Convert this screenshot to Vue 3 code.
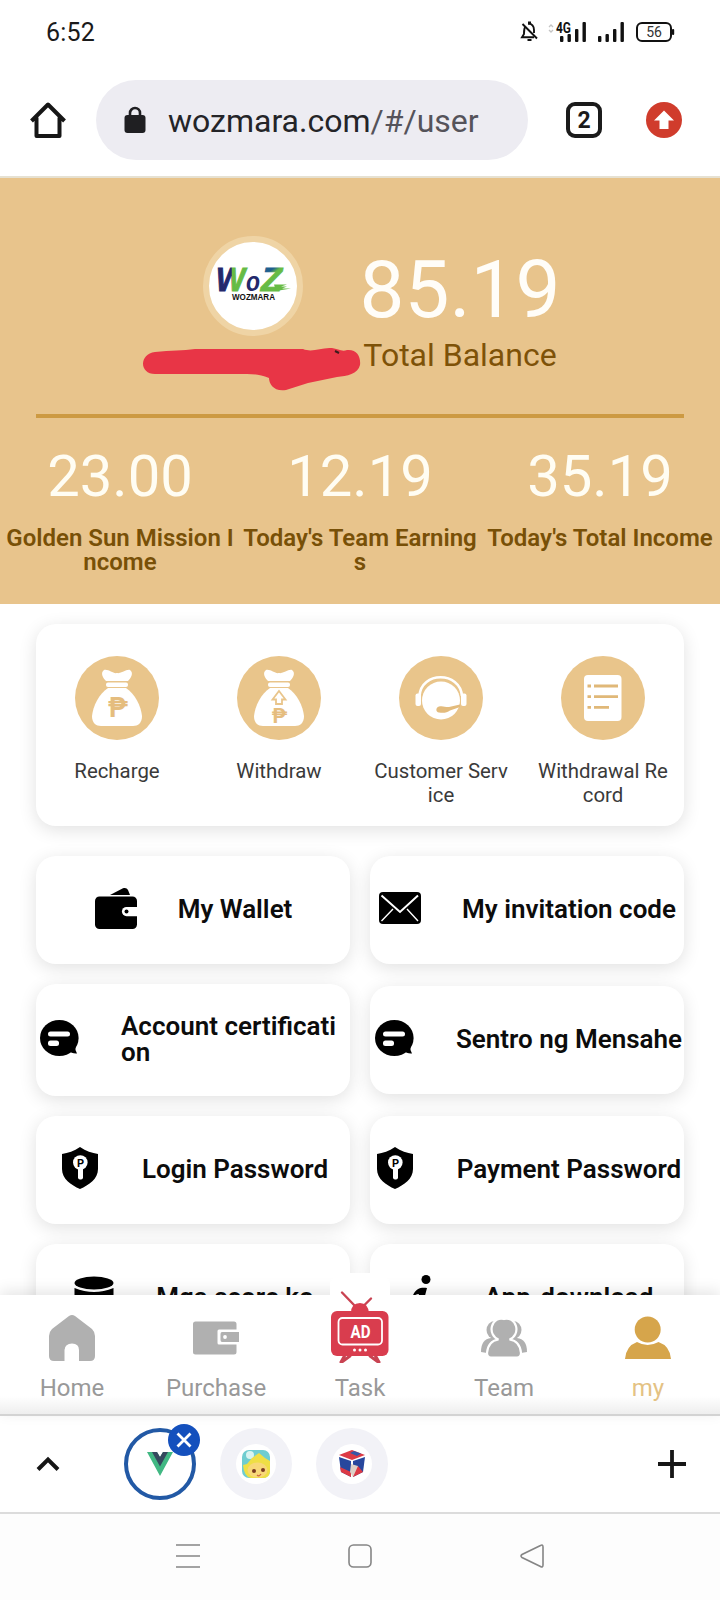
<script setup>
const stats = [
  { value: '23.00', label: 'Golden Sun Mission Income' },
  { value: '12.19', label: "Today's Team Earnings" },
  { value: '35.19', label: "Today's Total Income" },
]
const actions = [
  { icon: 'recharge', label: 'Recharge' },
  { icon: 'withdraw', label: 'Withdraw' },
  { icon: 'service', label: 'Customer Service' },
  { icon: 'record', label: 'Withdrawal Record' },
]
const links = [
  { icon: 'wallet', label: 'My Wallet' },
  { icon: 'mail', label: 'My invitation code' },
  { icon: 'chat', label: 'Account certification' },
  { icon: 'chat', label: 'Sentro ng Mensahe' },
  { icon: 'shield', label: 'Login Password' },
  { icon: 'shield', label: 'Payment Password' },
  { icon: 'coins', label: 'Mga score ko' },
  { icon: 'info', label: 'App-download' },
]
const tabs = ['Home', 'Purchase', 'Task', 'Team', 'my']
</script>

<template>
  <div class="phone">
    <div class="status">
      <span class="clock">6:52</span>
      <svg class="status-icons" width="156" height="24" viewBox="0 0 156 24">
        <g fill="none" stroke="#111" stroke-width="1.9">
          <path d="M5.5 6.5C3.8 8.500 4 11 4 14L2 17.200H14M8 3.500C12 3.500 14 6.500 14 10V13" />
          <path d="M2.500 4L17 18.500" />
        </g>
        <rect x="8" y="1.500" width="3" height="3" fill="#111" /><rect x="7.500" y="19" width="4" height="2" fill="#111" />
        <path d="M29 7l2-2 2 2M29 10l2 2 2-2" fill="none" stroke="#c4c4c4" stroke-width="1.300" />
        <text x="36" y="13" class="net" textLength="15" lengthAdjust="spacingAndGlyphs">4G</text>
        <g fill="#111">
          <rect x="40" y="16" width="3.400" height="6" rx="1" /><rect x="47.500" y="14" width="3.400" height="8" rx="1" />
          <rect x="55" y="9" width="3.400" height="13" rx="1" /><rect x="62.500" y="2" width="3.400" height="20" rx="1" />
          <rect x="78" y="16" width="3.400" height="6" rx="1" /><rect x="85.500" y="14" width="3.400" height="8" rx="1" />
          <rect x="93" y="9" width="3.400" height="13" rx="1" /><rect x="100.500" y="2" width="3.400" height="20" rx="1" />
          <rect x="152" y="9" width="2.200" height="6" rx="1" />
        </g>
        <rect x="117" y="3" width="34" height="18" rx="5" fill="none" stroke="#111" stroke-width="2" />
        <text x="134" y="17" class="batt" text-anchor="middle">56</text>
      </svg>
    </div>

    <div class="toolbar">
      <svg width="36" height="38" viewBox="0 0 36 38"><path d="M1.500 20L18 3.500 34.500 20M6.500 16.500V35H29.500V16.500" fill="none" stroke="#161616" stroke-width="4" stroke-linejoin="round" /></svg>
      <div class="url">
        <svg width="22" height="28" viewBox="0 0 22 28"><path d="M6 11V7a5 5 0 0 1 10 0v4" fill="none" stroke="#1f1f22" stroke-width="2.600" /><rect x="0.500" y="9" width="21" height="18" rx="3" fill="#1f1f22" /></svg>
        <span class="address">wozmara.com<span class="path">/#/user</span></span>
      </div>
      <div class="count">2</div>
      <svg width="36" height="36" viewBox="0 0 36 36"><circle cx="18" cy="18" r="18" fill="#d03c2c" /><path d="M18 8.500L28 18.500H22.500V27H13.500V18.500H8Z" fill="#fff" /></svg>
    </div>

    <main class="content">
      <header class="hero">
        <div class="summary">
          <div class="user">
            <div class="avatar">
              <svg width="78" height="38" viewBox="0 0 78 38">
                <defs>
                  <linearGradient id="w-fill" x1="0" y1="0" x2="1" y2="0"><stop offset="0.48" stop-color="#23286b" /><stop offset="0.52" stop-color="#66bb45" /></linearGradient>
                  <linearGradient id="z-fill" x1="0" y1="0" x2="0.5" y2="1"><stop offset="0.38" stop-color="#1f5f8e" /><stop offset="0.5" stop-color="#66bb45" /></linearGradient>
                </defs>
                <g class="logo">
                  <text x="2" y="26" fill="url(#w-fill)" stroke="url(#w-fill)" textLength="29" lengthAdjust="spacingAndGlyphs">W</text>
                  <text x="32" y="26" fill="#23286b" class="small-o" textLength="14" lengthAdjust="spacingAndGlyphs">o</text>
                  <text x="47" y="26" fill="url(#z-fill)" stroke="url(#z-fill)" textLength="21" lengthAdjust="spacingAndGlyphs">Z</text>
                </g>
                <path d="M60 19.500H73L67 21.500H73L68 23.500H77L62 26Z" fill="#66bb45" />
                <text x="18" y="35" class="brand" textLength="43" lengthAdjust="spacingAndGlyphs">WOZMARA</text>
              </svg>
            </div>
            <svg class="scribble" width="220" height="46" viewBox="0 0 220 46">
              <path d="M12 6C28 4 40 5 52 3L160 3C170 7 178 1 189 2 195 3 199 6 204 4 214 3 218 11 217 19 215 28 204 30 194 31L165 37 143 44C131 46 126 38 126 32 118 29 112 28 104 28H12C-4 28-4 8 12 6Z" fill="#e83546" />
              <path d="M192 5L196 7" stroke="#3a1c1c" stroke-width="2" />
            </svg>
          </div>
          <div class="balance">
            <div class="amount">85.19</div>
            <div class="caption">Total Balance</div>
          </div>
        </div>
        <div class="rule"></div>
        <div class="stats">
          <div v-for="s in stats" :key="s.label" class="stat">
            <div class="value">{{ s.value }}</div>
            <div class="name">{{ s.label }}</div>
          </div>
        </div>
      </header>

      <section class="actions">
        <div v-for="a in actions" :key="a.icon" class="action">
          <svg width="84" height="84" viewBox="0 0 84 84">
            <circle cx="42" cy="42" r="42" fill="#e9c58b" />
            <template v-if="a.icon === 'recharge' || a.icon === 'withdraw'">
              <path d="M29 14C34 13 38 18 42 17 46 18 51 13 55 14 59 17 56 22 53 25H31C28 22 25 17 29 14Z" fill="#fff" />
              <rect x="31" y="26.500" width="22" height="4.500" rx="2" fill="#fff" />
              <path d="M33 32H51C60 38 66 50 67 60 67 67 63 70 58 70H26C21 70 17 67 17 60 18 50 24 38 33 32Z" fill="#fff" />
              <text v-if="a.icon === 'recharge'" x="43" y="60.500" class="peso">₱</text>
              <template v-else>
                <path d="M42 35L48.500 43.500H45V48H39V43.500H35.500Z" fill="none" stroke="#e9c58b" stroke-width="1.800" />
                <text x="42.500" y="67" class="peso peso-small">₱</text>
              </template>
            </template>
            <template v-else-if="a.icon === 'service'">
              <path d="M20.500 40C22 15 61 15 63 40" fill="none" stroke="#fff" stroke-width="2.600" />
              <circle cx="42" cy="44.500" r="19" fill="#fff" />
              <rect x="16.500" y="37.500" width="5.500" height="12.500" rx="2" fill="#fff" />
              <rect x="62" y="37.500" width="5.500" height="12.500" rx="2" fill="#fff" />
              <path d="M40 50.500C44 49.500 47 51.500 50 51L61 48.500V51L51 54.500C48 57 44 57 40 56.500 36.500 56 36.500 51.500 40 50.500Z" fill="#e3bb7c" />
            </template>
            <template v-else>
              <rect x="23" y="19" width="37.500" height="46" rx="4" fill="#fff" />
              <path d="M33 30H57M33 40.700H57M33 51.400H48M26.500 30h3.500M26.500 40.700h3.500M26.500 51.400h3.500" stroke="#e0b878" stroke-width="2.800" />
            </template>
          </svg>
          <div class="action-label">{{ a.label }}</div>
        </div>
      </section>

      <section class="links">
        <div v-for="l in links" :key="l.label" class="link">
          <svg class="link-icon" width="44" height="44" viewBox="0 0 44 44">
            <template v-if="l.icon === 'wallet'">
              <path d="M16 7L29 0.300C31 -0.500 33 0 34 2L36 7Z" />
              <rect x="1" y="8.500" width="42" height="32.500" rx="4.500" />
              <path d="M44 19H32.500a4.600 4.600 0 0 0 0 9.200H44Z" fill="#fff" /><circle cx="32.500" cy="23.500" r="2" />
            </template>
            <template v-else-if="l.icon === 'mail'">
              <rect x="1" y="4" width="42" height="32" rx="4" />
              <path d="M3.500 7.500L22 24 40 7.500" fill="none" stroke="#fff" stroke-width="2" />
              <path d="M15 21L3.500 33M29 21L40 33" stroke="#fff" stroke-width="1.400" />
            </template>
            <template v-else-if="l.icon === 'chat'">
              <ellipse cx="22.300" cy="20" rx="19.300" ry="18" /><path d="M31 32L38.500 26V32L40 35.500Q35 36 31 32Z" />
              <rect x="11" y="13.500" width="22" height="5" rx="2.500" fill="#fff" /><rect x="11" y="22.500" width="11" height="5.500" rx="2.500" fill="#fff" />
            </template>
            <template v-else-if="l.icon === 'shield'">
              <path d="M22 -1C28 3 34 5 40 6V21C40 31 31 37 22 41 13 37 4 31 4 21V6C10 5 16 3 22 -1Z" />
              <circle cx="22.300" cy="14.500" r="7.300" fill="#fff" /><rect x="20" y="18" width="5" height="13.500" rx="2" fill="#fff" />
              <text x="22.500" y="18.500" class="key-letter">P</text>
            </template>
            <template v-else-if="l.icon === 'coins'">
              <ellipse cx="22" cy="7" rx="19.500" ry="6.500" /><path d="M2.500 12Q22 20 41.500 12V22Q22 30 2.500 22Z" />
            </template>
            <template v-else>
              <circle cx="25" cy="3.500" r="4.500" /><path d="M11 22C14 12 20 11 26 12L20 35Q25 34 28 28 24 42 15 40 12 38 13 33L18 18Q14 18 11 22Z" />
            </template>
          </svg>
          <span class="link-label">{{ l.label }}</span>
        </div>
      </section>
    </main>

    <nav class="tabbar">
      <div v-for="t in tabs" :key="t" class="tab" :class="{ active: t === 'my', task: t === 'Task' }">
        <svg v-if="t === 'Task'" class="tv" width="60" height="90" viewBox="0 -18 60 90">
          <g fill="none" stroke="#c94352" stroke-width="2.400" stroke-linecap="round"><path d="M12 1.500L25 15M41 7.500L34 14.500" /><path d="M15 64L10.500 72 20 65M45 64L49.500 72 40 65" stroke-width="3" /></g>
          <path d="M21 22Q21 12 30 12 38 12 39 22Z" fill="#d93d4e" />
          <rect x="1" y="20" width="57.500" height="45" rx="6" fill="#d93d4e" />
          <rect x="8.500" y="27" width="43.500" height="26.500" rx="4" fill="none" stroke="#fff" stroke-width="1.800" />
          <text x="20.500" y="47" class="ad" textLength="20" lengthAdjust="spacingAndGlyphs">AD</text>
          <g fill="#fff"><circle cx="24.500" cy="59" r="1.500" /><circle cx="30" cy="59" r="1.500" /><circle cx="35.500" cy="59" r="1.500" /></g>
        </svg>
        <svg v-else width="48" height="48" viewBox="0 0 48 48" fill="#b0b0b0">
          <path v-if="t === 'Home'" d="M21 2Q24 0 27 2L44 15Q47 18 47 22V42Q47 47 42 47H31V36Q31 29.500 24 29.500T16.500 36V47H6Q1 47 1 42V22Q1 18 4 15Z" />
          <template v-else-if="t === 'Purchase'">
            <path d="M3.500 7.500H42Q44.500 7.500 44.500 10V15.500H27Q25.500 15.500 25.500 17V29Q25.500 30.500 27 30.500H44.500V38Q44.500 40.500 42 40.500H3.500Q1 40.500 1 38V10Q1 7.500 3.500 7.500Z" />
            <path d="M30 18H47V28H30Q28.500 28 28.500 26V20Q28.500 18 30 18Z" /><circle cx="33" cy="23" r="1.900" fill="#fff" />
          </template>
          <template v-else-if="t === 'Team'">
            <ellipse cx="14.500" cy="16" rx="8" ry="9" /><ellipse cx="33.500" cy="16" rx="8" ry="9" />
            <path d="M1 38Q1 25 11 24H37Q47 25 47 38L41 39H7Z" />
            <path d="M24 5A9.500 10.500 0 0 1 29.500 25.500Q40 27 41 39 41 43.500 37 43.500H11Q7 43.500 7 39 8 27 18.500 25.500A9.500 10.500 0 0 1 24 5Z" stroke="#fff" stroke-width="2.200" />
          </template>
          <g v-else fill="#d6a54b"><circle cx="23.700" cy="15.500" r="13" /><path d="M1 45Q2 32 13 28 23.500 34 34.500 28 46 32 47 45Z" /></g>
        </svg>
        <span class="tab-label">{{ t }}</span>
      </div>
    </nav>

    <div class="strip">
      <svg class="chevron" width="24" height="16" viewBox="0 0 24 16"><path d="M2 13.500L12 3.500 22 13.500" fill="none" stroke="#161616" stroke-width="4" /></svg>
      <div class="site current">
        <svg width="26" height="26" viewBox="0 0 26 26"><path d="M0 1H10L13 6 16 1H26L13 25Z" fill="#41b883" /><path d="M5 1H10L13 6 16 1H21L13 15.500Z" fill="#35495e" /></svg>
        <span class="close"><svg width="16" height="16" viewBox="0 0 16 16"><path d="M1.500 1.500L14.500 14.500M14.500 1.500L1.500 14.500" stroke="#fff" stroke-width="2.800" /></svg></span>
      </div>
      <div class="site">
        <div class="disc">
          <svg width="28" height="28" viewBox="0 0 28 28">
            <rect width="28" height="28" rx="7" fill="#6fcdd0" />
            <circle cx="8" cy="5" r="4" fill="#d8f4f0" />
            <path d="M1 15L5 14 10 8 17 3 23 8 28 11V22Q27 28 21 28H9Q2 27 1 15Z" fill="#efdf45" />
            <ellipse cx="15.500" cy="20" rx="10" ry="7.500" fill="#f8d878" />
            <circle cx="12" cy="21" r="2" fill="#7a3b20" /><circle cx="21" cy="20" r="2" fill="#7a3b20" /><path d="M15 25Q17 27 19 24" fill="none" stroke="#cf6840" stroke-width="1.300" />
          </svg>
        </div>
      </div>
      <div class="site">
        <div class="disc">
          <svg width="28" height="28" viewBox="0 0 28 28">
            <path d="M1 5L14 0 27 5 14 10Z" fill="#dc3a45" /><path d="M12 3L19 6 23 3.500 16 1Z" fill="#3558a8" />
            <path d="M1 7L13 11V27L3 22Z" fill="#27479d" /><path d="M2 17L13 22V27L3 22Z" fill="#dc3a45" />
            <path d="M15 11L27 7 25 22 15 27Z" fill="#27479d" /><path d="M20 16L25 22 15 27V21Z" fill="#dc3a45" /><path d="M13 14L20 16 15 27 12 22Z" fill="#ddd1c7" />
          </svg>
        </div>
      </div>
      <svg class="plus" width="28" height="28" viewBox="0 0 28 28"><path d="M14 0V28M0 14H28" stroke="#161616" stroke-width="3.800" /></svg>
    </div>

    <div class="sysnav">
      <svg width="24" height="26" viewBox="0 0 24 26"><path d="M0 2H24M0 13H24M0 24H24" stroke="#858585" stroke-width="1.700" /></svg>
      <svg width="24" height="26" viewBox="0 0 24 26"><rect x="1" y="2" width="22" height="22" rx="4.500" fill="none" stroke="#858585" stroke-width="1.600" /></svg>
      <svg width="24" height="26" viewBox="0 0 24 26"><path d="M20.500 2.500Q23 1 23 4V22Q23 25 20.500 23.500L2 14.500Q0 13 2 11.500Z" fill="none" stroke="#858585" stroke-width="1.600" /></svg>
    </div>
  </div>
</template>

<style>
body { background: #fff; }
</style>

<style scoped>
* { box-sizing: border-box; }
svg { display: block; flex: none; }
.phone { width: 720px; height: 1600px; display: flex; flex-direction: column; overflow: hidden; background: #fff; font-family: Roboto, "Liberation Sans", sans-serif; }
.status { height: 64px; flex: none; display: flex; justify-content: space-between; align-items: center; padding: 0 44px 0 46px; }
.clock { font-size: 25px; line-height: 28px; color: #1a1a1a; letter-spacing: 0.2px; padding-top: 1px; }
.net { font-size: 14px; font-weight: 700; fill: #111; }
.batt { font-size: 14px; fill: #333; }
.toolbar { height: 114px; flex: none; display: flex; align-items: center; padding: 0 38px 0 30px; border-bottom: 2px solid #e6e1d2; }
.url { width: 432px; height: 80px; margin-left: 30px; padding: 0 28px; display: flex; align-items: center; gap: 22px; border-radius: 40px; background: #edecf2; }
.address { font-size: 32px; line-height: 40px; padding-top: 1px; color: #242428; white-space: nowrap; }
.path { color: #55535a; }
.count { width: 36px; height: 36px; margin: 0 44px 0 38px; border: 4px solid #1b1b1b; border-radius: 9px; font-size: 23px; line-height: 29px; font-weight: 700; text-align: center; color: #1b1b1b; }
.content { flex: none; height: 1117px; overflow: hidden; }
.hero { height: 426px; padding-top: 58px; background: #e8c48c; }
.summary { height: 178px; display: flex; padding-left: 143px; }
.user { width: 220px; display: flex; flex-direction: column; align-items: center; gap: 10px; }
.avatar { width: 100px; height: 100px; border: 6px solid #efd4a5; border-radius: 50%; background: #fff; display: flex; align-items: center; justify-content: center; }
.avatar svg { margin-top: -4px; overflow: visible; }
.logo { font-family: "Liberation Sans", sans-serif; font-size: 33px; font-weight: 700; font-style: italic; }
.small-o { font-size: 27px; }
.brand { font-family: "Liberation Sans", sans-serif; font-size: 8.5px; font-weight: 700; fill: #111; }
.balance { width: 194px; display: flex; flex-direction: column; align-items: center; padding-top: 14px; white-space: nowrap; }
.amount { font-size: 80px; line-height: 80px; color: #fffdf8; }
.caption { margin-top: 7px; font-size: 32px; line-height: 36px; color: #7e5208; }
.rule { height: 4px; margin: 0 36px; background: #cd9a42; }
.stats { display: grid; grid-template-columns: repeat(3, 240px); margin-top: 28px; text-align: center; }
.value { font-size: 58px; line-height: 60px; color: #fffdf3; }
.name { margin-top: 20px; padding: 0 2px; font-size: 24px; line-height: 24px; font-weight: 600; color: #785007; word-break: break-all; }
.actions { height: 202px; margin: 20px 36px 0; padding-top: 32px; display: grid; grid-template-columns: repeat(4, 1fr); border-radius: 20px; background: #fff; box-shadow: 0 4px 18px rgba(0, 0, 0, 0.12); }
.action { display: flex; flex-direction: column; align-items: center; }
.action-label { width: 136px; margin-top: 19px; font-size: 20.4px; line-height: 24px; text-align: center; word-break: break-all; color: #3a3a3a; }
.peso { font-size: 27px; font-weight: 700; text-anchor: middle; fill: #e5bd7e; }
.peso-small { font-size: 21px; }
.links { margin: 30px 36px 0; display: grid; grid-template-columns: 314px 314px; gap: 20px; align-items: center; }
.link { min-height: 108px; padding: 29px 0; display: flex; align-items: center; justify-content: center; gap: 40px; border-radius: 20px; background: #fff; box-shadow: 0 4px 18px rgba(0, 0, 0, 0.12); }
.link-icon { overflow: visible; fill: #000; }
.link-label { min-width: 0; max-width: 228px; padding-bottom: 2px; font-size: 26px; line-height: 26px; font-weight: 600; color: #0c0c0c; word-break: break-all; }
.key-letter { font-size: 11px; font-weight: 700; text-anchor: middle; }
.tabbar { position: relative; z-index: 1; flex: none; height: 121px; padding-top: 19px; display: grid; grid-template-columns: repeat(5, 1fr); border-bottom: 2px solid #d3d3d3; background: linear-gradient(#fff 85%, #eee); box-shadow: 0 -4px 14px rgba(0, 0, 0, 0.1); }
.tab { display: flex; flex-direction: column; align-items: center; color: #999; }
.tv { margin-top: -41px; margin-bottom: -1px; border-radius: 12px 12px 0 0; background: #fff; }
.ad { font-size: 19px; font-weight: 700; fill: #fff; }
.tab-label { margin-top: 12px; font-size: 24px; line-height: 28px; }
.active { color: #e4c284; }
.strip { flex: none; height: 98px; display: flex; align-items: center; padding: 0 34px 0 36px; border-bottom: 2px solid #dcdcdc; background: #fff; }
.chevron { margin-right: 64px; }
.site { position: relative; width: 72px; height: 72px; margin-right: 24px; display: flex; align-items: center; justify-content: center; border-radius: 50%; background: #f2f2f7; }
.current { border: 4px solid #2259a5; background: #fff; }
.close { position: absolute; top: -8px; right: -8px; width: 32px; height: 32px; display: flex; align-items: center; justify-content: center; border-radius: 50%; background: #1450bd; }
.disc { width: 40px; height: 40px; display: flex; align-items: center; justify-content: center; border-radius: 50%; background: #fff; }
.plus { margin-left: auto; }
.sysnav { flex: 1; display: flex; justify-content: space-between; align-items: center; padding: 0 176px 2px; background: #fdfdfd; }
</style>
